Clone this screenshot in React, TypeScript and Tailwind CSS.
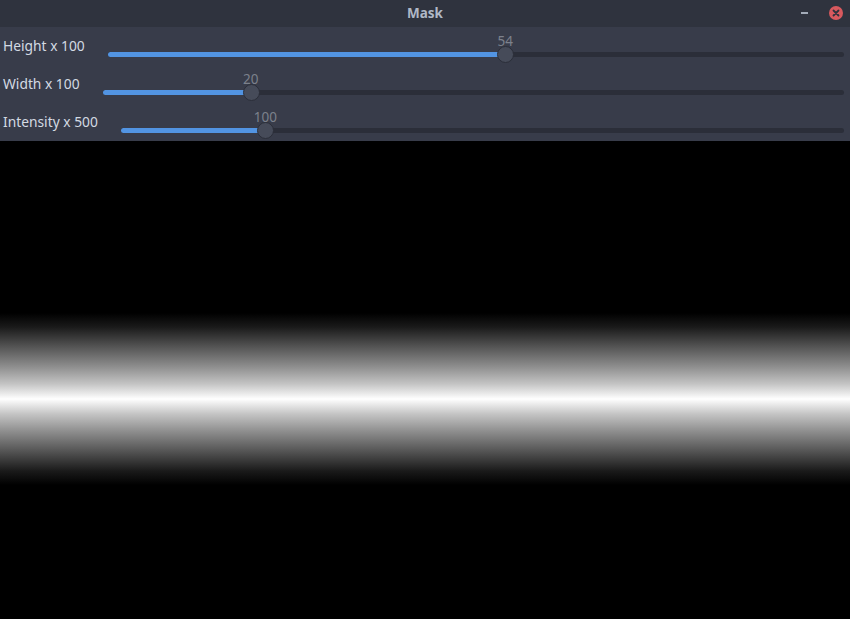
import React from "react";

type Row = { label: string; value: number; max: number; shown: string };

const rows: Row[] = [
  { label: "Height x 100", value: 54, max: 100, shown: "54" },
  { label: "Width x 100", value: 20, max: 100, shown: "20" },
  { label: "Intensity x 500", value: 100, max: 500, shown: "100" },
];

function Slider({ row }: { row: Row }) {
  const pct = (row.value / row.max) * 100;
  return (
    <div className="relative flex-1 h-[38px] mr-[6px]">
      <div className="absolute left-0 right-0 top-[25px] h-[5px] rounded-full bg-[#2b2e39]" />
      <div
        className="absolute left-0 top-[25px] h-[5px] rounded-full bg-[#5294e2]"
        style={{ width: `${pct}%` }}
      />
      <div
        className="absolute top-[19px] w-[17px] h-[17px] -ml-[8px] rounded-full bg-[#464b59] border border-[#2b2e39]"
        style={{ left: `${pct}%` }}
      />
      <div
        className="absolute top-[6px] -translate-x-1/2 text-[13.5px] leading-[16px] text-[#7c818c]"
        style={{ left: `${pct}%` }}
      >
        {row.shown}
      </div>
    </div>
  );
}

export default function App() {
  return (
    <div
      className="w-[850px] h-[619px] flex flex-col bg-black overflow-hidden"
      style={{ fontFamily: '"Noto Sans", "Open Sans", sans-serif' }}
    >
      <div className="h-[27px] bg-[#2f333e] flex items-center relative shrink-0">
        <div className="flex-1 text-center text-[13.5px] font-bold text-[#afb8c6]">Mask</div>
        <div className="absolute right-[42px] top-[12px] w-[7px] h-[2px] bg-[#a3abb8]" />
        <svg className="absolute right-[7px] top-[6px]" width="14" height="14" viewBox="0 0 14 14">
          <circle cx="7" cy="7" r="7" fill="#d8595e" />
          <path d="M4.5 4.5 L9.5 9.5 M9.5 4.5 L4.5 9.5" stroke="#2f333e" strokeWidth="1.8" strokeLinecap="round" />
        </svg>
      </div>
      <div className="bg-[#383c4a] flex flex-col shrink-0">
        {rows.map((r) => (
          <div key={r.label} className="flex items-start h-[38px]">
            <div className="pl-[3px] pt-[9px] pr-[23px] text-[13.8px] leading-[19px] text-[#d3dae3] whitespace-nowrap">
              {r.label}
            </div>
            <Slider row={r} />
          </div>
        ))}
      </div>
      <div className="flex-1 bg-[linear-gradient(to_bottom,#000_172px,#1a1a1a_186px,#555_206px,#8f8f8f_226px,#c4c4c4_243px,#fff_258px,#c4c4c4_273px,#8f8f8f_290px,#555_310px,#1a1a1a_330px,#000_344px)]" />
    </div>
  );
}
